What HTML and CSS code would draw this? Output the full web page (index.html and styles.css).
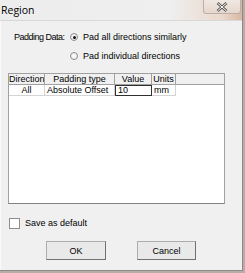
FILE: index.html
```html
<!DOCTYPE html>
<html>
<head>
<meta charset="utf-8">
<link rel="stylesheet" href="styles.css">
</head>
<body>
<div class="window">
  <div class="titlebar">
    <span class="title">Region</span>
    <div class="close"><svg width="12" height="10" viewBox="0 0 12 10"><path d="M1.5 1 L10.5 9 M10.5 1 L1.5 9" stroke="#555" stroke-width="2.6" fill="none"/><path d="M1.5 1 L10.5 9 M10.5 1 L1.5 9" stroke="#fff" stroke-width="1" fill="none"/></svg></div>
  </div>
  <div class="content">
    <div class="padrow">
      <span class="label">Padding Data:</span>
      <div class="options">
        <div class="opt"><span class="radio checked"></span>Pad all directions similarly</div>
        <div class="opt"><span class="radio"></span>Pad individual directions</div>
      </div>
    </div>
    <div class="grid">
      <div class="hdr">
        <div class="c c1">Direction</div>
        <div class="c c2">Padding type</div>
        <div class="c c3">Value</div>
        <div class="c c4">Units</div>
        <div class="c c5"></div>
      </div>
      <div class="datarow">
        <div class="d c1 center">All</div>
        <div class="d c2">Absolute Offset</div>
        <div class="d c3 edit">10</div>
        <div class="d c4">mm</div>
      </div>
    </div>
    <div class="savedef"><span class="check"></span>Save as default</div>
    <div class="buttons">
      <div class="btn ok">OK</div>
      <div class="btn cancel">Cancel</div>
    </div>
  </div>
</div>
</body>
</html>
```
FILE: styles.css
```css
html, body { margin: 0; padding: 0; }
body {
  width: 245px; height: 273px; overflow: hidden;
  background: #b8aca4;
  font-family: "Liberation Sans", Arial, sans-serif;
  font-size: 9px; color: #000;
}
.window {
  width: 242px; height: 270px;
  border-right: 1px solid #8a8a8a;
  border-bottom: 1px solid #8a8a8a;
  background: #f0f0f0;
  display: flex; flex-direction: column;
}
.titlebar {
  height: 21px; box-sizing: border-box;
  background: linear-gradient(90deg, #ededed 0%, #efefef 70%, #ead8cc 92%, #d9b7a0 100%);
  border-bottom: 1px solid #d8d8d8;
  display: flex; align-items: flex-start; justify-content: space-between;
}
.title {
  font-family: "Open Sans", "Noto Sans", sans-serif;
  font-size: 10.5px; padding: 3px 0 0 1px; color: #000;
}
.close {
  width: 38px; height: 14px; box-sizing: border-box;
  margin-right: 1px;
  border: 1px solid #b9b0aa; border-top: none;
  border-radius: 0 0 3px 3px;
  background: linear-gradient(#f0e8e2, #e6d6cc);
  display: flex; align-items: center; justify-content: center;
}
.content {
  flex: 1;
  padding: 0 0 0 7px;
  display: flex; flex-direction: column;
  border-left: 1px solid #fafafa;
}
.padrow { display: flex; margin-top: 10px; }
.label { margin-left: 6px; width: 56px; flex: none; line-height: 12px; white-space: nowrap; letter-spacing: -0.5px; }
.options { display: flex; flex-direction: column; gap: 7px; }
.opt { display: flex; align-items: center; height: 12px; white-space: nowrap; }
.radio {
  width: 8px; height: 8px; box-sizing: border-box; border-radius: 50%;
  border: 1px solid #8f8f8f; background: radial-gradient(#fff, #e4e4e4);
  margin-right: 5px; position: relative;
}
.radio.checked::after {
  content: ""; position: absolute; left: 1.5px; top: 1.5px;
  width: 3px; height: 3px; border-radius: 50%; background: #111;
}
.grid {
  margin-top: 11px;
  width: 217px; height: 131px; box-sizing: border-box;
  border: 1px solid #a0a0a0; background: #fff;
  border-bottom-color: #828282;
}
.hdr { display: flex; height: 11px; background: #f0f0f0; }
.hdr .c {
  box-sizing: border-box; height: 11px; line-height: 10px;
  border-right: 1px solid #a0a0a0; border-bottom: 1px solid #a0a0a0;
  text-align: center; overflow: hidden; white-space: nowrap;
}
.c1 { width: 36px; }
.c2 { width: 70px; }
.c3 { width: 37px; }
.c4 { width: 24px; }
.hdr .c5 { flex: 1; border-right: none; }
.datarow { display: flex; height: 11px; }
.d {
  box-sizing: border-box; height: 11px; line-height: 11px;
  border-right: 1px solid #d4d4d4; border-bottom: 1px solid #d4d4d4;
  padding-left: 2px; white-space: nowrap; overflow: hidden;
}
.center { text-align: center; padding-left: 0; }
.edit { border: 1px solid #303030; line-height: 9px; padding-left: 2px; }
.savedef { display: flex; align-items: center; margin-top: 14px; height: 10px; }
.check {
  width: 9px; height: 9px; border: 1px solid #8f8f8f; background: #fff;
  margin: 0 5px 0 1px;
}
.buttons { display: flex; margin-top: 13px; margin-left: 38px; gap: 31px; }
.btn {
  width: 60px; height: 19px; box-sizing: border-box;
  border: 1px solid #adadad; border-right-color: #707070; border-bottom-color: #707070;
  background: #e9e9e9; display: flex; align-items: center; justify-content: center;
}
.cancel { width: 59px; }
```
